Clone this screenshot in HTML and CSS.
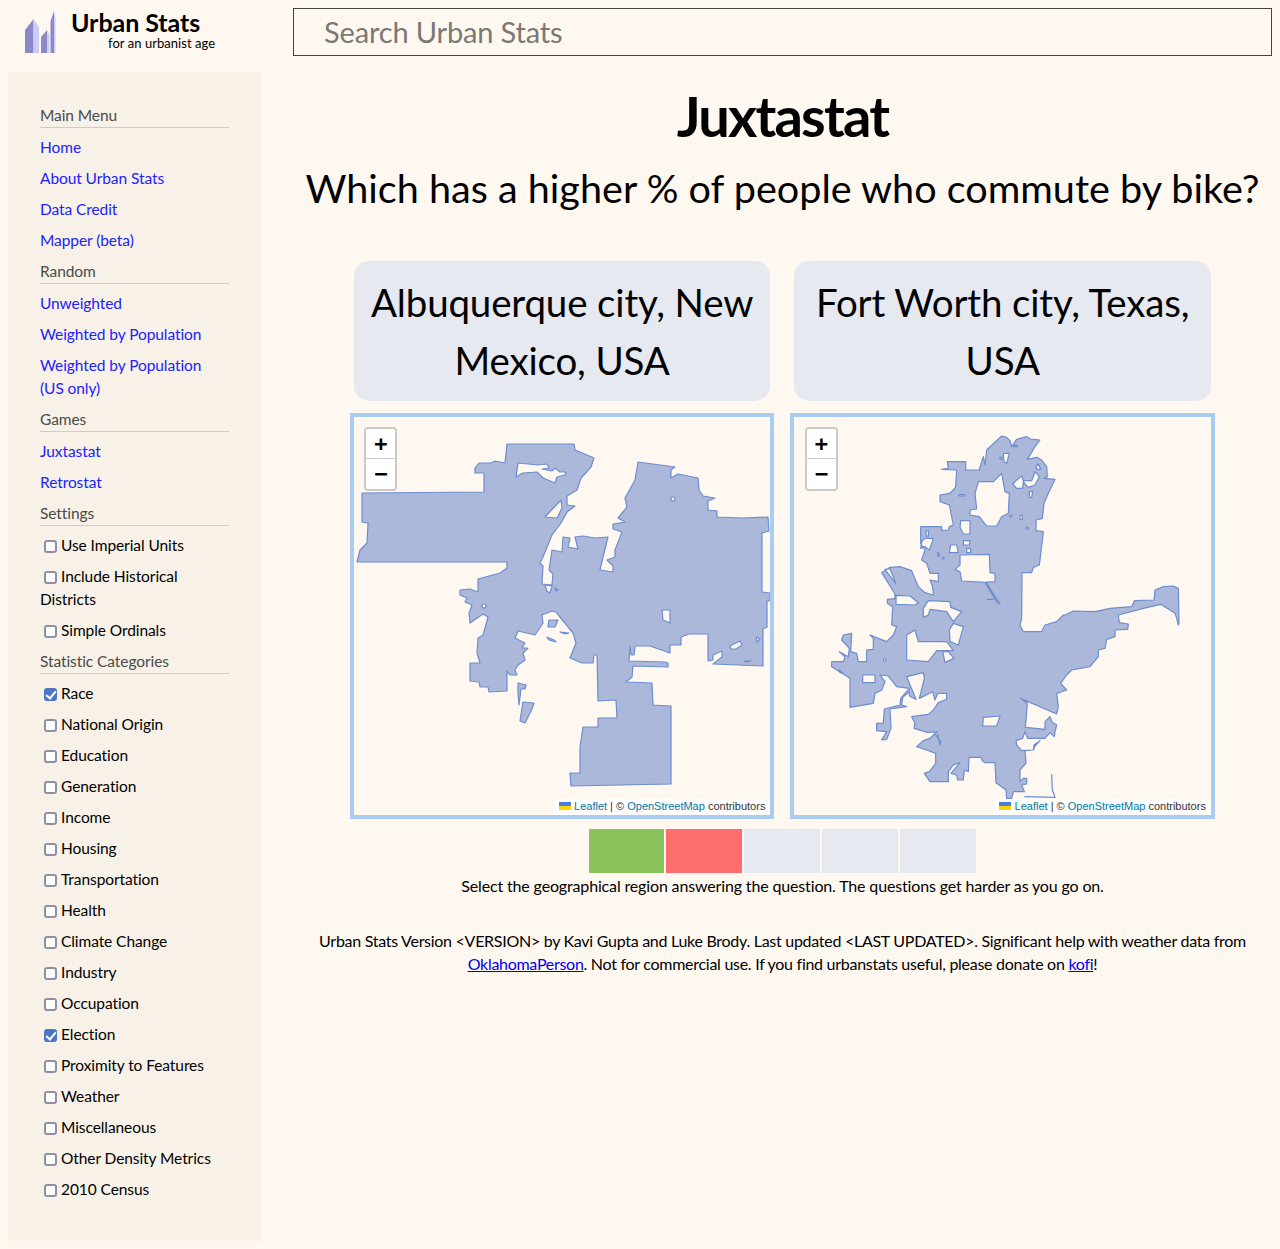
FILE: index.html
```html
<!DOCTYPE html>
<html lang="en">
<head>
<meta charset="utf-8">
<title>Juxtastat</title>
<link rel="stylesheet" href="styles.css">
</head>
<body>
<div class="shell">
  <header class="brand">
    <svg class="logo" viewBox="0 0 32 44" aria-hidden="true">
      <polygon class="bd" points="1,20 9.5,9 9.5,43 1,43"/><polygon class="bl" points="9.5,9 15,17 15,43 9.5,43"/>
      <polygon class="bd" points="17,27 23,20 23,43 17,43"/><polygon class="bl" points="23,20 25.5,25 25.5,43 23,43"/>
      <polygon class="bd" points="26.5,11 30,1 30,43 26.5,43"/><polygon class="bl" points="30,1 31.5,8 31.5,43 30,43"/>
    </svg>
    <div class="brand-text">
      <div class="brand-name">Urban Stats</div>
      <div class="brand-sub">for an urbanist age</div>
    </div>
  </header>
  <div class="search-col"><input class="search" type="text" placeholder="Search Urban Stats"></div>

  <aside class="sidebar">
    <h2 class="nav-head">Main Menu</h2>
    <ul class="nav">
      <li><a href="#">Home</a></li>
      <li><a href="#">About Urban Stats</a></li>
      <li><a href="#">Data Credit</a></li>
      <li><a href="#">Mapper (beta)</a></li>
    </ul>
    <h2 class="nav-head">Random</h2>
    <ul class="nav">
      <li><a href="#">Unweighted</a></li>
      <li><a href="#">Weighted by Population</a></li>
      <li><a href="#">Weighted by Population (US only)</a></li>
    </ul>
    <h2 class="nav-head">Games</h2>
    <ul class="nav">
      <li><a href="#">Juxtastat</a></li>
      <li><a href="#">Retrostat</a></li>
    </ul>
    <h2 class="nav-head">Settings</h2>
    <ul class="nav">
      <li><label><input type="checkbox">Use Imperial Units</label></li>
      <li><label><input type="checkbox">Include Historical Districts</label></li>
      <li><label><input type="checkbox">Simple Ordinals</label></li>
    </ul>
    <h2 class="nav-head">Statistic Categories</h2>
    <ul class="nav">
      <li><label><input type="checkbox" checked>Race</label></li>
      <li><label><input type="checkbox">National Origin</label></li>
      <li><label><input type="checkbox">Education</label></li>
      <li><label><input type="checkbox">Generation</label></li>
      <li><label><input type="checkbox">Income</label></li>
      <li><label><input type="checkbox">Housing</label></li>
      <li><label><input type="checkbox">Transportation</label></li>
      <li><label><input type="checkbox">Health</label></li>
      <li><label><input type="checkbox">Climate Change</label></li>
      <li><label><input type="checkbox">Industry</label></li>
      <li><label><input type="checkbox">Occupation</label></li>
      <li><label><input type="checkbox" checked>Election</label></li>
      <li><label><input type="checkbox">Proximity to Features</label></li>
      <li><label><input type="checkbox">Weather</label></li>
      <li><label><input type="checkbox">Miscellaneous</label></li>
      <li><label><input type="checkbox">Other Density Metrics</label></li>
      <li><label><input type="checkbox">2010 Census</label></li>
    </ul>
  </aside>

  <main class="content">
    <h1 class="title">Juxtastat</h1>
    <p class="question">Which has a higher % of people who commute by bike?</p>

    <div class="versus">
      <div class="choice">
        <button class="place" type="button">Albuquerque city, New Mexico, USA</button>
        <div class="map">
          <svg class="shape" viewBox="354 417 416.5 398" preserveAspectRatio="xMinYMin slice" aria-hidden="true">
            <path class="city alb" fill-rule="evenodd" d="M507 444 574 444 575 450 580 452 594 458 591 467 581 478 577 490 567 496 567 505 575 506 567 512 561 523 552 535 543 557 540 563 543 566 542 584 552 585 553 574 549 570 552 550 562 552 563 537 570 538 568 547 578 549 575 537 583 536 595 538 608 537 603 557 600 570 613 572 613 566 607 560 615 557 615 550 622 532 613 529 613 524 625 522 618 518 627 507 625 498 635 480 638 462 675 467 671 470 671 478 678 474 698 478 699 490 703 496 715 498 708 501 708 510 717 511 717 517 743 518 768 517 769 531 762 533 762 592 770 593 770 601 767 601 767 627 763 629 763 666 713 664 722 657 722 651 713 655 713 660 708 661 708 634 689 634 681 637 681 645 670 645 670 653 650 646 635 646 634 655 631 655 630 646 629 661 665 662 668 663 668 667 633 666 632 677 626 682 652 683 653 705 671 706 671 784 571 786 570 773 580 773 580 747 583 727 598 727 598 718 617 718 616 700 598 701 597 655 594 655 593 663 582 663 570 658 576 643 573 633 560 617 556 612 552 611 542 615 543 623 535 635 518 631 515 638 525 643 522 648 528 648 523 653 525 660 518 665 515 670 517 675 510 675 507 671 507 691 489 692 488 687 480 687 479 682 470 681 470 663 480 663 477 653 478 638 483 635 485 628 488 617 483 614 470 623 469 613 472 605 465 602 467 598 460 595 460 590 470 589 478 592 478 579 500 573 507 568 507 562 357 562 360 550 367 543 368 523 362 522 362 493 484 492 484 473 475 473 475 468 479 463 491 463 495 461 505 463Z
            M518 463 538 465 547 464 549 468 542 469 552 471 555 468 560 472 566 472 565 475 557 477 555 483 543 478 537 472 523 473 516 477Z
            M561 500 562 508 557 518 545 517Z
            M671 499a2 2 0 1 0 4 0a2 2 0 1 0-4 0Z
            M662 610 670 610 670 623 663 620Z
            M482 606a2 2 0 1 0 4 0a2 2 0 1 0-4 0Z
            M549 620 558 620 555 627 548 627Z
            M547 637 554 640 556 642 549 640Z
            M560 632 569 633 565 634Z
            M730 646 740 641 742 645 736 649 731 649Z
            M744 661 751 661 746 662Z
            M756 637 760 639 757 642Z
            M545 585 552 586 550 593 547 591Z
            M555 588 558 590 556 591Z"/>
            <path class="city alb" d="M518 683 526 685 525 689 521 689 519 705 518 694ZM523 702 534 703 532 709 525 723 520 721Z"/>
          </svg>
          <div class="zoom"><button type="button">+</button><button type="button">−</button></div>
          <div class="attrib"><svg class="flag" viewBox="0 0 12 8" aria-hidden="true"><rect width="12" height="4" fill="#4c7be1"/><rect y="4" width="12" height="4" fill="#ffd500"/></svg> <a href="#">Leaflet</a> | © <a href="#">OpenStreetMap</a> contributors</div>
        </div>
      </div>
      <div class="choice">
        <button class="place" type="button">Fort Worth city, Texas, USA</button>
        <div class="map">
          <svg class="shape" viewBox="12 21 1249.5 1194" preserveAspectRatio="xMinYMin slice" aria-hidden="true">
            <path class="city fw" fill-rule="evenodd" d="M635 78 650 82 660 92 665 110 680 88 710 80 722 87 750 90 735 110 712 148 740 142 755 150 770 170 772 200 762 205 795 208 775 250 762 280 757 325 738 330 738 362 760 365 748 465 730 472 725 488 696 488 695 625 690 645 700 665 755 665 765 645 800 635 820 615 825 615 850 603 915 605 960 595 1025 590 1033 572 1092 570 1095 540 1120 530 1150 528 1165 535 1167 640 1165 645 1160 625 1155 610 1140 600 1112 583 1060 595 985 615 988 638 1015 642 1013 658 975 660 975 680 950 688 945 715 925 720 925 740 900 770 845 780 830 795 812 820 830 840 800 850 805 890 800 912 692 865 712 880 706 952 765 958 765 935 780 920 785 935 800 945 795 965 793 980 780 968 765 985 713 985 705 965 698 985 678 992 680 1005 695 1022 730 1020 732 1005 750 992 735 1008 730 1020 705 1022 708 1060 690 1080 690 1115 700 1105 710 1105 710 1122 695 1125 703 1145 670 1145 665 1165 650 1165 648 1140 618 1118 615 1058 585 1058 577 1052 573 1042 537 1042 535 1085 523 1080 520 1110 503 1110 500 1095 483 1090 510 1058 490 1065 475 1085 475 1115 420 1115 403 1090 418 1085 437 1060 437 1030 410 1020 380 1010 400 992 420 985 440 965 450 1005 452 995 430 965 415 968 372 955 375 940 365 920 415 913 430 900 445 878 470 868 470 850 443 850 435 870 428 845 388 865 403 805 400 788 350 800 378 868 358 858 358 845 338 862 335 885 350 890 300 897 303 955 290 988 275 990 290 965 260 962 260 940 280 940 283 897 330 885 332 865 358 835 320 830 295 798 270 795 285 815 275 840 255 850 250 880 180 892 180 805 125 770 125 755 160 755 165 740 148 725 175 740 178 715 155 690 160 675 185 670 182 725 200 730 205 755 230 755 230 720 250 718 250 685 240 675 290 695 310 675 320 650 305 645 308 590 292 580 292 568 315 566 315 552 275 488 300 472 330 470 365 482 370 495 385 530 405 548 430 555 428 530 420 510 445 515 445 490 420 490 410 460 395 450 405 420 392 400 392 350 455 350 455 362 475 360 478 350 490 345 478 285 450 275 450 255 478 250 490 240 497 230 500 180 455 178 475 175 472 155 527 155 527 180 568 180 575 155 580 140 585 165 590 120Z
            M285 478 300 476 318 522Z
            M318 556 360 558 385 578 375 585 318 583Z
            M565 215 610 215 635 190 645 245 658 250 655 310 635 320 620 348 590 348 568 320 540 315 540 300 560 297 555 250Z
            M512 332 540 332 540 372 520 372 510 352Z
            M482 405 500 405 505 428 478 428Z
            M520 392 540 392 538 405 520 405Z
            M530 415 542 415 542 428 530 428Z
            M510 435 598 433 600 488 615 490 615 515 588 516 630 583 620 575 585 517 515 513 510 485 495 478 510 465Z
            M680 210 695 198 700 212 725 212 735 185 748 200 735 225 715 232 700 215 698 235 680 235 668 222Z
            M640 130 658 130 650 160 642 155Z
            M718 245 728 245 725 262 718 262Z
            M405 385 430 385 425 400 418 420 405 410 392 415 395 395Z
            M738 170 745 162 752 178 740 178Z
            M408 362 415 362 415 378 408 378Z
            M580 922 630 918 620 948 578 948Z
            M350 675 375 660 385 695 470 695 490 722 440 722 415 755 350 750Z
            M400 622 400 595 415 572 480 575 482 592 515 605 490 635 470 605 420 598 415 615Z
            M478 660 490 640 520 650 505 705 480 695Z
            M458 725 475 725 492 745 465 757Z
            M218 795 255 795 255 818 218 818Z
            M280 750a4 4 0 1 0 8 0a4 4 0 1 0-8 0Z
            M148 780 160 790 150 788Z
            M660 318a3 3 0 1 0 6 0a3 3 0 1 0-6 0Z
            M690 316 697 316 697 328 690 328Z
            M708 355a4 3 0 1 0 8 0a4 3 0 1 0-8 0Z
            M507 254 525 254 525 258 507 258Z
            M672 106 682 106 682 110 672 110Z
            M442 426 450 436 444 440Z
            M456 444a3 3 0 1 0 6 0a3 3 0 1 0-6 0Z
            M630 142 636 142 636 148 630 148Z"/>
            <path class="outline" d="M785 1092 787 1140 795 1162 703 1160M590 568 612 568"/>
          </svg>
          <div class="zoom"><button type="button">+</button><button type="button">−</button></div>
          <div class="attrib"><svg class="flag" viewBox="0 0 12 8" aria-hidden="true"><rect width="12" height="4" fill="#4c7be1"/><rect y="4" width="12" height="4" fill="#ffd500"/></svg> <a href="#">Leaflet</a> | © <a href="#">OpenStreetMap</a> contributors</div>
        </div>
      </div>
    </div>

    <div class="progress">
      <span class="cell good"></span>
      <span class="cell bad"></span>
      <span class="cell"></span>
      <span class="cell"></span>
      <span class="cell"></span>
    </div>
    <p class="hint">Select the geographical region answering the question. The questions get harder as you go on.</p>
    <p class="credits">Urban Stats Version &lt;VERSION&gt; by Kavi Gupta and Luke Brody. Last updated &lt;LAST UPDATED&gt;. Significant help with weather data from <a href="#">OklahomaPerson</a>. Not for commercial use. If you find urbanstats useful, please donate on <a href="#">kofi</a>!</p>
  </main>
</div>
</body>
</html>
```

FILE: styles.css
```css
* { box-sizing: border-box; }
html, body { background: #fff8f0; }
body {
  margin: 8px;
  font-family: "Lato", "Liberation Sans", sans-serif;
  font-size: 16px;
  line-height: 23px;
  color: #000;
}
.shell {
  display: grid;
  grid-template-columns: 253px 979px;
  grid-template-rows: 64px auto;
  column-gap: 32px;
  align-items: start;
}
.brand { display: flex; align-items: flex-start; padding: 2px 0 0 16px; height: 64px; }
.logo { width: 32px; height: 44px; flex: none; }
.bd { fill: #8a8ac6; }
.bl { fill: #ccccfa; }
.brand-text { margin-left: 15px; margin-top: -1px; }
.brand-name { font-size: 25px; font-weight: 700; line-height: 26px; letter-spacing: -0.05px; }
.brand-sub { font-size: 13px; line-height: 16px; padding-left: 37px; letter-spacing: 0.05px; }
.search-col { height: 64px; }
.search {
  display: block;
  width: 979px;
  height: 48px;
  border: 1px solid #444;
  background: #fff8f0;
  padding: 0 30px 2px;
  font: inherit;
  font-size: 29px;
  letter-spacing: -0.15px;
  color: #000;
  border-radius: 0;
  outline: none;
}
.search::placeholder { color: #7b7873; opacity: 1; }

.sidebar {
  background: #f7f1e8;
  padding: 32px;
  height: 1169px;
  font-size: 15.5px;
  letter-spacing: -0.08px;
}
.nav-head {
  margin: 0 0 8px;
  font-size: 15.5px;
  font-weight: 400;
  line-height: 22px;
  height: 24px;
  color: #4a4a4a;
  border-bottom: 1px solid #cfccc8;
}
.nav { list-style: none; margin: 0; padding: 0 2px 0 0; }
.nav li { margin-bottom: 8px; }
.nav a { color: #2222ff; text-decoration: none; }
.nav input {
  appearance: none;
  position: relative;
  display: inline-block;
  vertical-align: -2px;
  width: 13px;
  height: 13px;
  margin: 0 4px 0 4px;
  background: #fff;
  border: 2px solid #8f8fa6;
  border-radius: 3px;
}
.nav input:checked { background: #4f74c6; border-color: #4f74c6; }
.nav input:checked::before {
  content: "";
  position: absolute;
  left: 2px;
  top: -1px;
  width: 4px;
  height: 8px;
  border: solid #fff;
  border-width: 0 2px 2px 0;
  transform: rotate(40deg);
}

.content { padding: 0; text-align: center; }
.title { margin: 8px 0 0; font-size: 56px; font-weight: 700; line-height: 72px; letter-spacing: -1.8px; }
.question { margin: 8px 0 0; font-size: 39.6px; line-height: 56px; white-space: nowrap; }
.versus {
  display: grid;
  grid-template-columns: 1fr 1fr;
  column-gap: 16px;
  margin: 45px 57.1px 0 56.9px;
}
.choice { min-width: 0; display: flex; flex-direction: column; }
.place {
  display: block;
  height: 140px;
  margin: 0 4px 12px;
  padding: 12px 8px;
  border: 0;
  border-radius: 15px;
  background: #e6e9ef;
  font: inherit;
  font-size: 38.5px;
  letter-spacing: -0.15px;
  line-height: 58px;
  color: #000;
}
.map {
  position: relative;
  height: 406px;
  border: 4px solid #a9cdf0;
  overflow: hidden;
}
.shape { display: block; width: 100%; height: 100%; }
.city.alb { fill: #abb8d9; stroke: #6c8dcf; stroke-width: 1.2; stroke-linejoin: round; }
.city.fw { fill: #abb8d9; stroke: #6c8dcf; stroke-width: 3.6; stroke-linejoin: round; }
.outline { fill: none; stroke: #6c8dcf; stroke-width: 3.6; }
.zoom {
  position: absolute;
  left: 10.5px;
  top: 10px;
  width: 33px;
  border: 2px solid #cdc9c3;
  border-radius: 4px;
  background: #fff;
  overflow: hidden;
}
.zoom button {
  display: block;
  width: 29px;
  height: 30px;
  padding: 0;
  border: 0;
  border-bottom: 1px solid #ccc;
  background: #fff;
  font: 700 22px/30px "DejaVu Sans Mono", "Liberation Mono", monospace;
  color: #000;
  text-align: center;
}
.zoom button:last-child { border-bottom: 0; }
.attrib {
  position: absolute;
  right: 0;
  bottom: 0;
  padding: 0 5px 1px;
  background: rgba(255, 255, 255, .8);
  font: 11px/15px "Liberation Sans", Arial, sans-serif;
  color: #333;
  white-space: nowrap;
}
.attrib a { color: #0078a8; text-decoration: none; }
.flag { display: inline-block; width: 12px; height: 8px; vertical-align: 0; }

.progress {
  display: grid;
  grid-template-columns: repeat(5, 1fr);
  column-gap: 2px;
  width: 387px;
  height: 44px;
  margin: 10px 0 0 295.6px;
}
.cell { background: #e6e9ef; }
.cell.good { background: #8ac35c; }
.cell.bad { background: #ff6e6e; }
.hint { margin: 1px 0 0; letter-spacing: -0.15px; }
.credits { margin: 32px 0 0; padding: 0 16px; letter-spacing: -0.28px; }
.credits a { color: #0000ee; text-decoration: underline; }
```
